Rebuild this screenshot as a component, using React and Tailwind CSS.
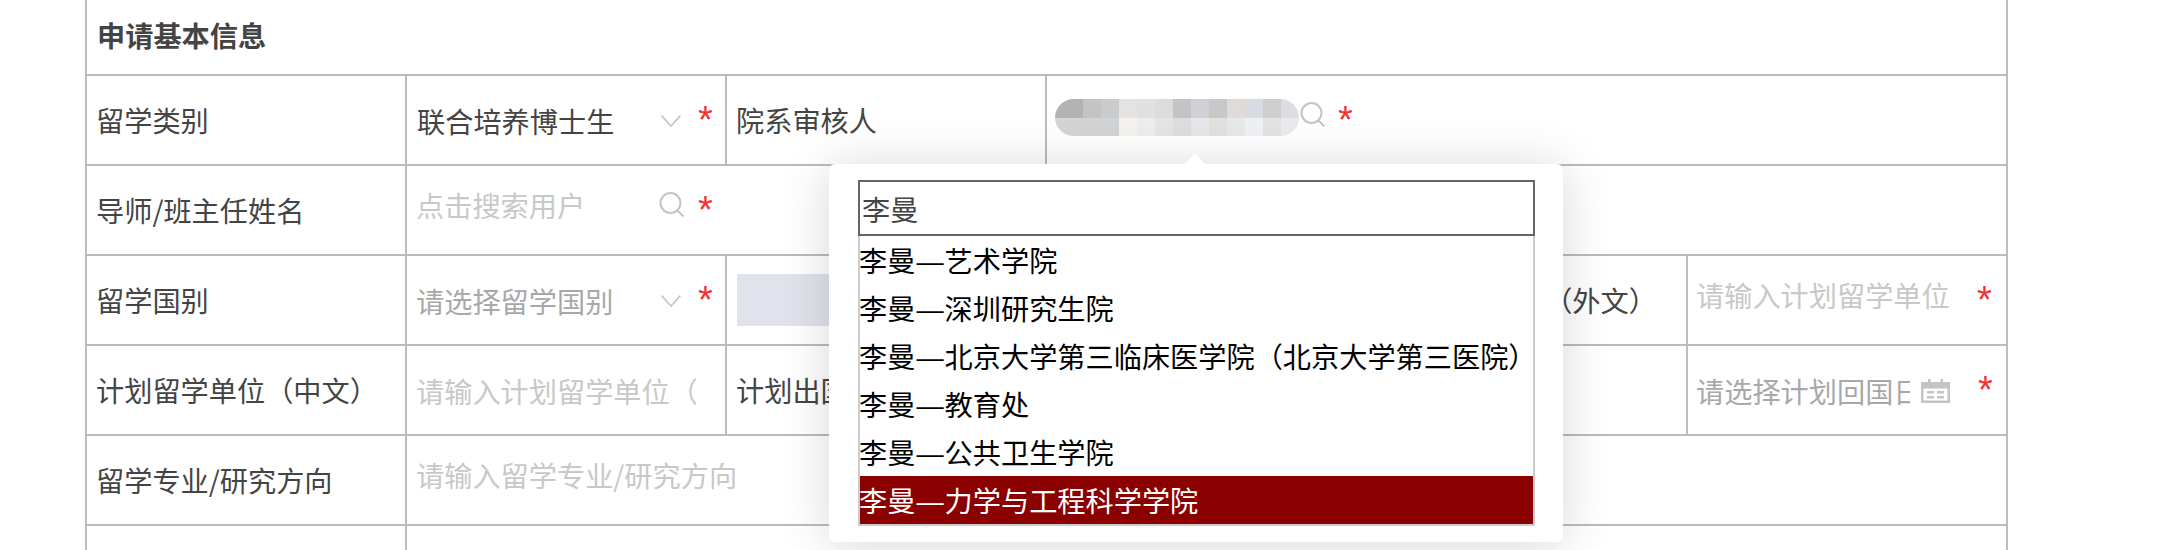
import React from 'react';

const mosaicTop = ['#b3b3b3', '#b3b3b3', '#c4c4c4', '#cacbcc', '#e5e3e1', '#dfe1e1', '#dcdcdb', '#c4c4c6', '#d0d1d6', '#c8c8c9', '#dedbd9', '#d8dbe1', '#cfcecd', '#dcdde1'];
const mosaicBottom = ['#d3d4d4', '#d3d4d4', '#d3d4d4', '#d1d3d4', '#f3f2ef', '#eceeee', '#e3e4e4', '#dcdddd', '#e6e7e9', '#e1e1df', '#e7e8e8', '#eef0f3', '#e3e3e3', '#e9eaed'];
const options = ['艺术学院', '深圳研究生院', '北京大学第三临床医学院（北京大学第三医院）', '教育处', '公共卫生学院'];

const Star = ({ className = 'ml-[14px]' }) => (
  <span className={`mt-[24px] h-[40px] font-['Liberation_Sans'] text-[38px] leading-[40px] text-[#f33333] ${className}`}>*</span>
);

const Chevron = ({ className }) => (
  <svg viewBox="0 0 20 12" className={`h-[12px] w-[20px] shrink-0 ${className}`} fill="none" stroke="#c4c4c4" strokeWidth="1.6">
    <path d="M.6.6 10 11 19.4.6" />
  </svg>
);

const Search = ({ className }) => (
  <svg viewBox="0 0 26 25" className={`h-[25px] w-[26px] shrink-0 ${className}`} fill="none" stroke="#c4c4c4" strokeWidth="2">
    <circle cx="11.500" cy="11" r="10" />
    <path d="m18.500 18.500 6 6" />
  </svg>
);

const CalendarIcon = () => (
  <svg viewBox="0 0 29 24" className="ml-[11px] mt-[33px] h-[24px] w-[29px] shrink-0" fill="#c4c4c4">
    <path d="M7 0h2.500v3h10V0H22v3h7v21H0V3h7zM2.500 9.500v12h24v-12z" />
    <path d="M6 12h7v2.500H6zM16 12h7v2.500h-7zM6 17h7v2.500H6zM16 17h7v2.500h-7z" />
  </svg>
);

const Label = ({ children }) => (
  <td className="overflow-hidden border-2 border-[#bbbbbb] pl-[9px] align-middle whitespace-nowrap">{children}</td>
);

const Option = ({ name, className = '' }) => (
  <li className={`h-[48px] -indent-[1px] leading-[48px] whitespace-nowrap ${className}`}>
    李曼<span className="inline-block origin-left scale-x-[1.2] pr-[4px] indent-0">—</span>{name}
  </li>
);

export default function App() {
  return (
    <div className="relative h-[550px] w-[2174px] overflow-hidden bg-white font-['Noto_Sans_CJK_SC',sans-serif] text-[28.2px] leading-[40px] text-[#444444]">
      <table className="ml-[85px] -mt-[16px] w-[1921px] table-fixed border-collapse">
        <colgroup>
          <col className="w-[320px]" />
          <col className="w-[320px]" />
          <col className="w-[320px]" />
          <col className="w-[320px]" />
          <col className="w-[321px]" />
          <col className="w-[320px]" />
        </colgroup>
        <tbody>
          <tr className="h-[90px]">
            <td colSpan={6} className="border-2 border-[#bbbbbb] pl-[10px] pt-[10px] align-middle font-bold">申请基本信息</td>
          </tr>
          <tr className="h-[90px]">
            <Label>留学类别</Label>
            <td className="border-2 border-[#bbbbbb] p-0">
              <div className="flex h-[88px] items-start pl-[10px]">
                <span className="mt-[25px] w-[244px] overflow-hidden whitespace-nowrap">联合培养博士生</span>
                <Chevron className="mt-[39px]" />
                <Star className="ml-[17px]" />
              </div>
            </td>
            <Label>院系审核人</Label>
            <td colSpan={3} className="border-2 border-[#bbbbbb] p-0">
              <div className="flex h-[88px] items-start pl-[8px]">
                <div className="mt-[23px] flex h-[37px] w-[244px] shrink-0 flex-col overflow-hidden rounded-full">
                  <div className="flex h-[19px]">
                    {mosaicTop.map((c, i) => (
                      <div key={i} className={i === 0 ? 'w-[10px]' : 'w-[18px]'} style={{ backgroundColor: c }} />
                    ))}
                  </div>
                  <div className="flex h-[18px]">
                    {mosaicBottom.map((c, i) => (
                      <div key={i} className={i === 0 ? 'w-[10px]' : 'w-[18px]'} style={{ backgroundColor: c }} />
                    ))}
                  </div>
                </div>
                <Search className="ml-[1px] mt-[26px]" />
                <Star className="ml-[12px]" />
              </div>
            </td>
          </tr>
          <tr className="h-[90px]">
            <Label>导师/班主任姓名</Label>
            <td colSpan={5} className="border-2 border-[#bbbbbb] p-0">
              <div className="flex h-[88px] items-start pl-[9px]">
                <span className="mt-[19px] w-[243px] overflow-hidden whitespace-nowrap text-[#c8c8c8]">点击搜索用户</span>
                <Search className="mt-[26px]" />
                <Star className="ml-[13px]" />
              </div>
            </td>
          </tr>
          <tr className="h-[90px]">
            <Label>留学国别</Label>
            <td className="border-2 border-[#bbbbbb] p-0">
              <div className="flex h-[88px] items-start pl-[9px]">
                <span className="mt-[25px] w-[245px] overflow-hidden whitespace-nowrap text-[#a8a8a8]">请选择留学国别</span>
                <Chevron className="mt-[39px]" />
                <Star className="ml-[17px]" />
              </div>
            </td>
            <td colSpan={2} className="border-2 border-[#bbbbbb] p-0">
              <div className="ml-[10px] h-[52px] w-[300px] bg-[#e0e3eb]" />
            </td>
            <td className="overflow-hidden border-2 border-[#bbbbbb] pl-[8px] align-middle whitespace-nowrap">计划留学单位（外文）</td>
            <td className="border-2 border-[#bbbbbb] p-0">
              <div className="flex h-[88px] items-start pl-[8px]">
                <span className="mt-[19px] w-[254px] overflow-hidden whitespace-nowrap text-[#c8c8c8]">请输入计划留学单位</span>
                <Star className="ml-[27px]" />
              </div>
            </td>
          </tr>
          <tr className="h-[90px]">
            <Label>计划留学单位（中文）</Label>
            <td className="border-2 border-[#bbbbbb] p-0">
              <div className="flex h-[88px] items-start pl-[9px]">
                <span className="mt-[25px] w-[280px] overflow-hidden whitespace-nowrap text-[#c8c8c8]">请输入计划留学单位（中文）</span>
              </div>
            </td>
            <Label>计划出国日期</Label>
            <td className="border-2 border-[#bbbbbb] p-0" />
            <Label>计划回国日期</Label>
            <td className="border-2 border-[#bbbbbb] p-0">
              <div className="flex h-[88px] items-start pl-[8px]">
                <span className="mt-[25px] w-[214px] overflow-hidden whitespace-nowrap text-[#a8a8a8]">请选择计划回国日期</span>
                <CalendarIcon />
                <Star className="ml-[28px]" />
              </div>
            </td>
          </tr>
          <tr className="h-[90px]">
            <Label>留学专业/研究方向</Label>
            <td colSpan={5} className="border-2 border-[#bbbbbb] p-0">
              <div className="flex h-[88px] items-start pl-[9px]">
                <span className="mt-[19px] whitespace-nowrap text-[#c8c8c8]">请输入留学专业/研究方向</span>
              </div>
            </td>
          </tr>
          <tr className="h-[90px]">
            <td className="border-2 border-[#bbbbbb]" />
            <td colSpan={5} className="border-2 border-[#bbbbbb]" />
          </tr>
        </tbody>
      </table>

      {/* search popover */}
      <div className="absolute left-[829px] top-[164px] h-[378px] w-[734px] rounded-[6px] bg-white pl-[29px] pt-[16px] shadow-[0_3px_50px_rgba(0,0,0,0.16)]">
        <div className="absolute -top-[11px] left-[355px] h-0 w-0 border-x-[11px] border-b-[12px] border-x-transparent border-b-white" />
        <input
          readOnly
          value="李曼"
          className="block h-[56px] w-[677px] border-2 border-[#666666] pl-[2px] text-[28.2px] text-[#444444] outline-none"
        />
        <ul className="w-[677px] border-x-2 border-b-2 border-[#cccccc] text-black">
          {options.map((o) => (
            <Option key={o} name={o} />
          ))}
          <Option name="力学与工程科学学院" className="bg-[#8b0000] text-white" />
        </ul>
      </div>
    </div>
  );
}
